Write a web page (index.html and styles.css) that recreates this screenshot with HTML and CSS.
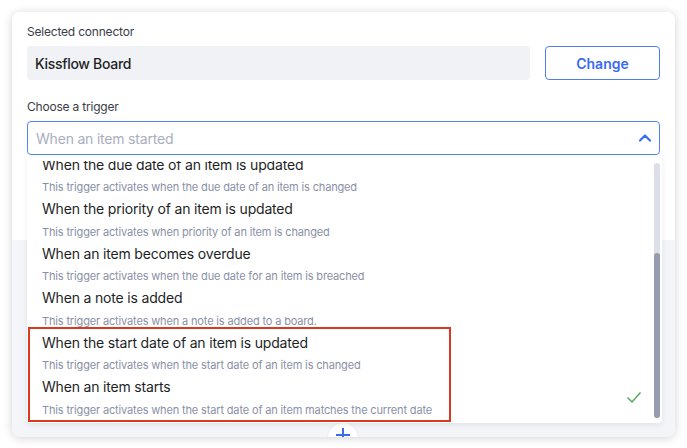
FILE: index.html
```html
<!DOCTYPE html>
<html>
<head>
<meta charset="utf-8">
<link rel="stylesheet" href="styles.css">
</head>
<body>
<div class="page">
  <div class="card">
    <div class="top">
      <div class="label">Selected connector</div>
      <div class="connector-row">
        <div class="connector">Kissflow Board</div>
        <button class="change-btn">Change</button>
      </div>
      <div class="label label-trigger">Choose a trigger</div>
      <div class="select">
        <span class="placeholder">When an item started</span>
        <svg class="chevron" width="12" height="8" viewBox="0 0 12 8"><path d="M1 6.5 L6 1.5 L11 6.5" fill="none" stroke="#3a6cf0" stroke-width="2.2" stroke-linecap="round" stroke-linejoin="round"/></svg>
      </div>
    </div>
    <div class="bottom"></div>

    <div class="add-circle">
      <svg width="30" height="30" viewBox="0 0 30 30"><path d="M15 5 V19 M8 12 H22" stroke="#3a6cf0" stroke-width="2" fill="none"/></svg>
    </div>

    <div class="menu">
      <div class="viewport">
        <div class="items">
          <div class="item"><div class="title">When the due date of an item is updated</div><div class="desc">This trigger activates when the due date of an item is changed</div></div>
          <div class="item"><div class="title">When the priority of an item is updated</div><div class="desc">This trigger activates when priority of an item is changed</div></div>
          <div class="item"><div class="title">When an item becomes overdue</div><div class="desc">This trigger activates when the due date for an item is breached</div></div>
          <div class="item"><div class="title">When a note is added</div><div class="desc">This trigger activates when a note is added to a board.</div></div>
          <div class="item"><div class="title">When the start date of an item is updated</div><div class="desc">This trigger activates when the start date of an item is changed</div></div>
          <div class="item selected"><div class="title">When an item starts</div><div class="desc">This trigger activates when the start date of an item matches the current date</div>
            <svg class="check" width="16" height="13" viewBox="0 0 16 13"><path d="M1.5 6.5 L6 11 L14.5 1.5" fill="none" stroke="#5aa75a" stroke-width="1.5"/></svg>
          </div>
        </div>
      </div>
      <div class="scroll-track"><div class="scroll-thumb"></div></div>
    </div>

    <div class="highlight"></div>
  </div>
</div>
</body>
</html>
```

FILE: styles.css
```css
* { box-sizing: border-box; }
html, body {
  margin: 0;
  padding: 0;
  background: #ffffff;
  font-family: Inter, "Noto Sans", sans-serif;
}
.page {
  padding: 12px;
}
.card {
  position: relative;
  height: 425px;
  border-radius: 8px;
  overflow: hidden;
  background: #f4f5f8;
  box-shadow: 0 1px 10px rgba(0, 0, 0, 0.18);
  display: flex;
  flex-direction: column;
}
.top {
  background: #ffffff;
  height: 228px;
  padding: 12px 15px 0 15px;
}
.label {
  font-size: 12px;
  line-height: 16px;
  letter-spacing: -0.2px;
  color: #3a3d46;
}
.label-trigger {
  margin-top: 19px;
}
.connector-row {
  margin-top: 6px;
  display: flex;
  gap: 15px;
  height: 34px;
}
.connector {
  flex: 1;
  background: #f1f2f5;
  border-radius: 4px;
  padding-left: 8px;
  font-size: 14px;
  font-weight: 500;
  letter-spacing: -0.3px;
  color: #1d1f26;
  display: flex;
  align-items: center;
}
.change-btn {
  width: 115px;
  height: 34px;
  background: #ffffff;
  border: 1px solid #4f7ef3;
  border-radius: 4px;
  color: #3a6cf0;
  font-family: Inter, sans-serif;
  font-size: 14px;
  font-weight: 600;
  padding: 0;
}
.select {
  margin-top: 6px;
  height: 34px;
  border: 1px solid #5585f4;
  border-radius: 4px;
  display: flex;
  align-items: center;
  justify-content: space-between;
  padding: 0 8px 0 8px;
}
.placeholder {
  font-size: 14px;
  letter-spacing: -0.2px;
  color: #a9aec0;
}
.chevron {
  display: block;
}
.bottom {
  flex: 1;
  background: #f4f5f8;
}
.add-circle {
  position: absolute;
  left: 316px;
  top: 411px;
  width: 30px;
  height: 30px;
  border-radius: 50%;
  background: #ffffff;
  box-shadow: 0 0 3px rgba(0, 0, 0, 0.08);
}
.add-circle svg { display: block; }
.menu {
  position: absolute;
  left: 15px;
  top: 145px;
  width: 635px;
  height: 266px;
  background: #ffffff;
  border-radius: 0 0 4px 4px;
  box-shadow: 0 2px 6px rgba(0, 0, 0, 0.08);
  padding-top: 4px;
}
.viewport {
  height: 262px;
  overflow: hidden;
}
.items {
  margin-top: -7.5px;
}
.item {
  position: relative;
  padding-left: 15px;
}
.title {
  font-size: 14px;
  line-height: 22.5px;
  letter-spacing: -0.18px;
  color: #1d1f26;
}
.desc {
  font-size: 11px;
  line-height: 22.1px;
  letter-spacing: -0.15px;
  color: #8a90a6;
}
.check {
  position: absolute;
  right: 20px;
  top: 15px;
}
.scroll-track {
  position: absolute;
  right: 2px;
  top: 6px;
  width: 6px;
  height: 255px;
  border-radius: 3px;
  background: #dcdfe7;
}
.scroll-thumb {
  margin-top: 90px;
  height: 165px;
  border-radius: 3px;
  background: #969bae;
}
.highlight {
  position: absolute;
  left: 16px;
  top: 315px;
  width: 423px;
  height: 95px;
  border: 2px solid #d8391f;
}
```
